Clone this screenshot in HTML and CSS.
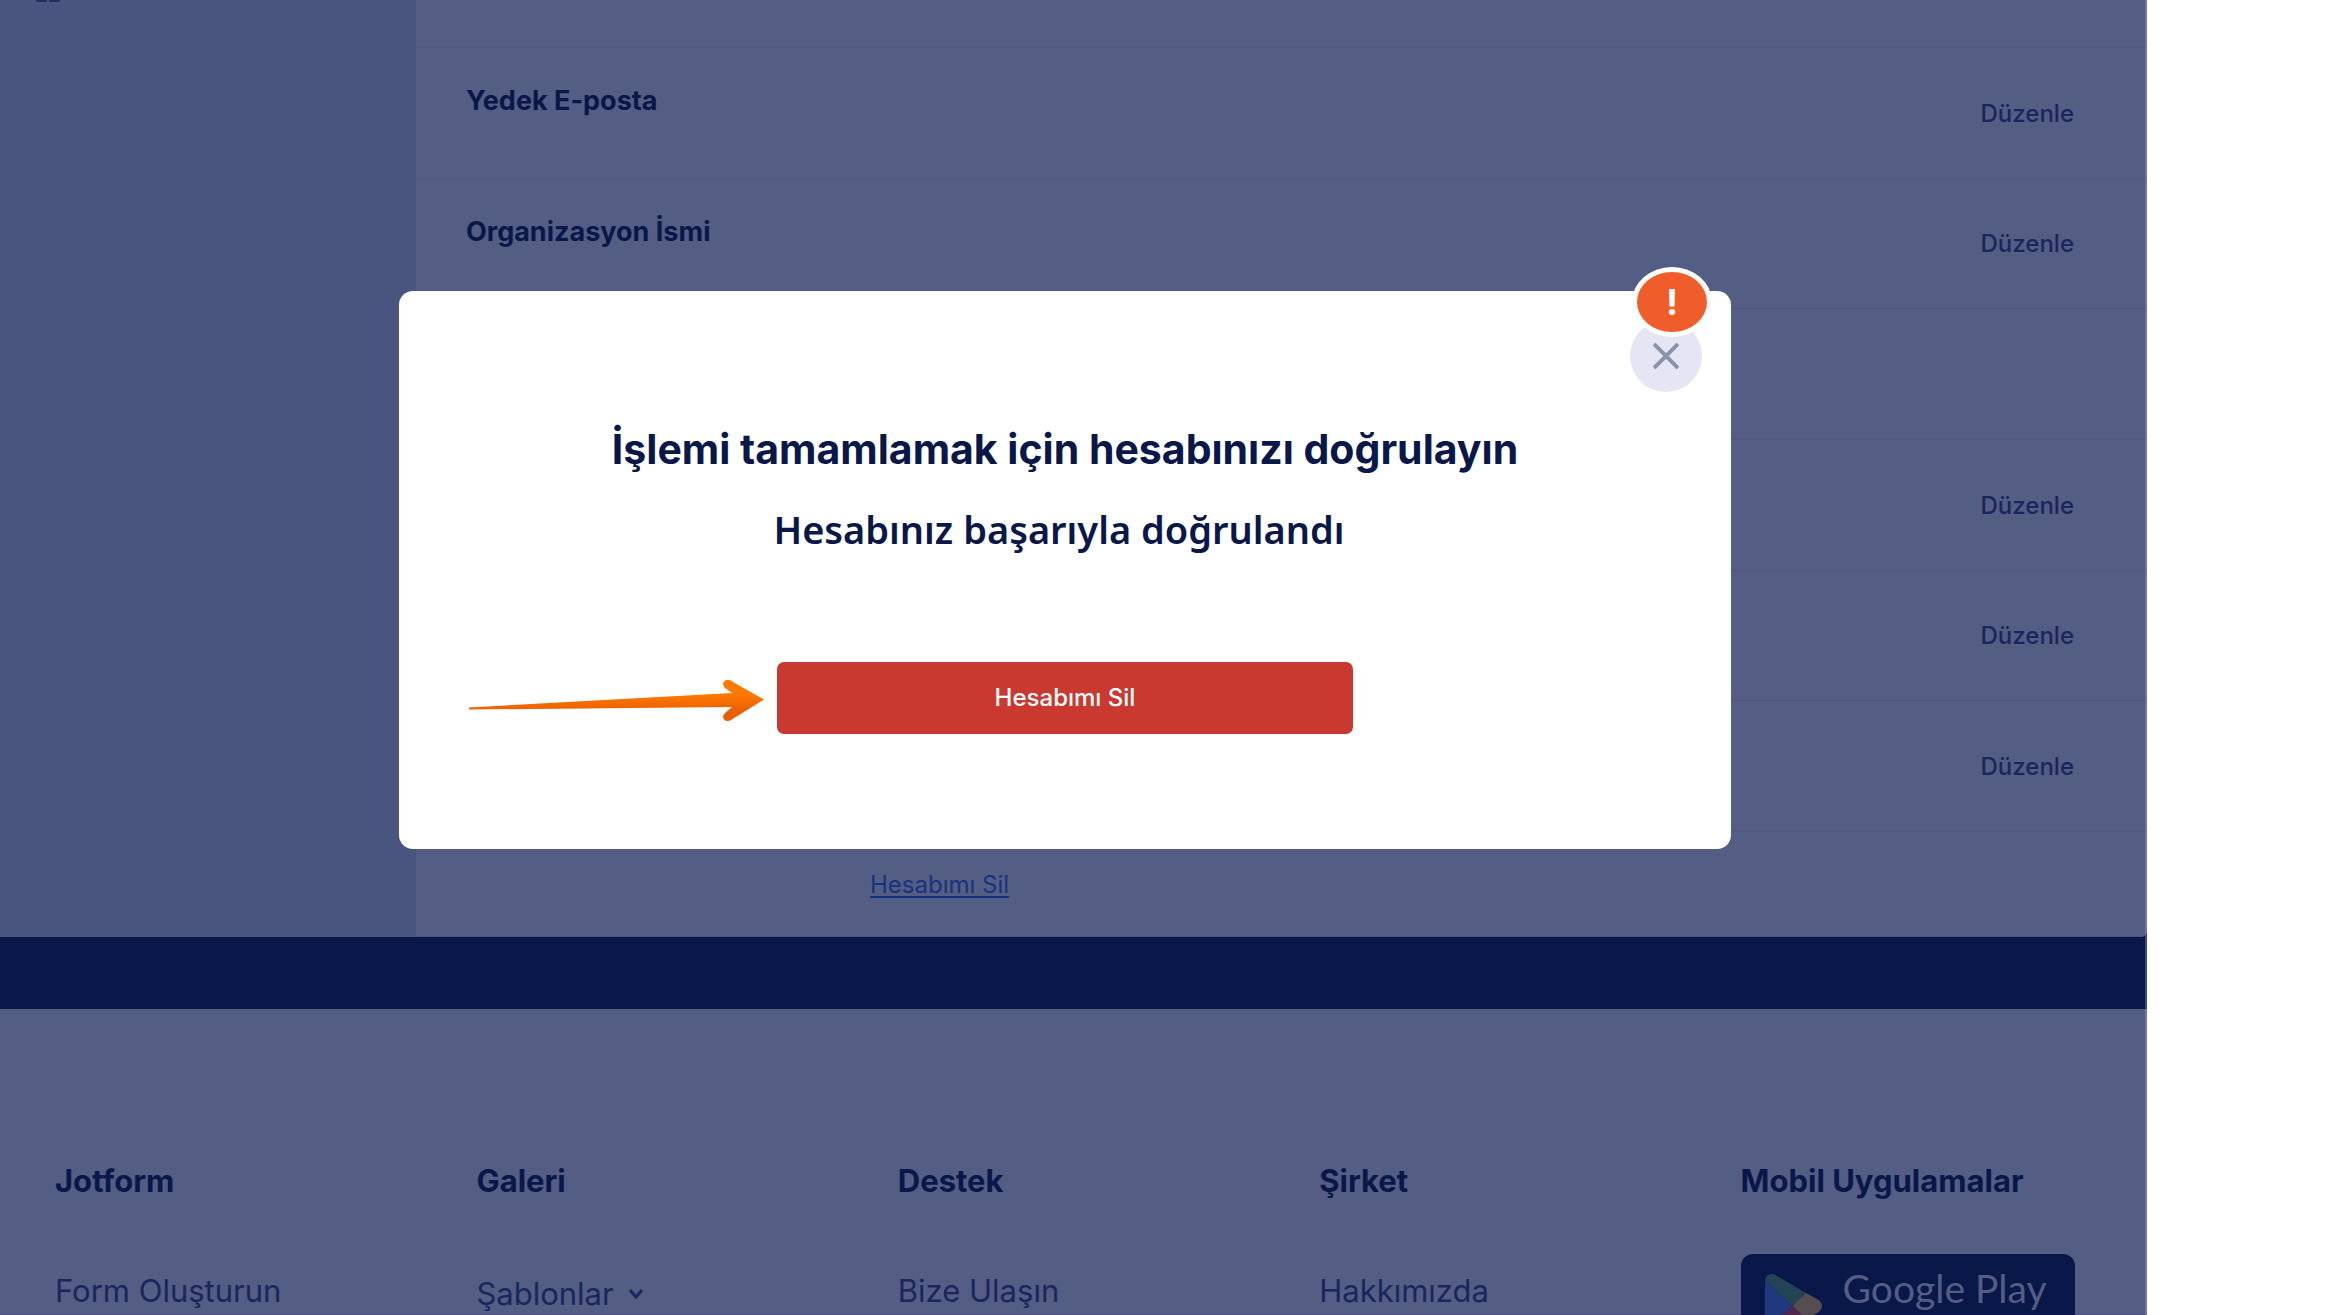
FILE: index.html
```
<!DOCTYPE html>
<html lang="tr">
<head>
<meta charset="utf-8">
<meta name="viewport" content="width=device-width, initial-scale=1">
<title>Hesap Ayarları</title>
<link rel="stylesheet" href="styles.css">
</head>
<body>
<div class="stage">
  <main class="account">
    <aside class="sidebar">
      <svg class="sidebar-icon" width="24" height="2" viewBox="0 0 24 2" aria-hidden="true"><path d="M0 0h11v1l-1 1H2L0 1zM13 0h11v1l-2 1h-8l-1-1z" fill="#242c62"/></svg>
    </aside>
    <section class="settings">
      <div class="settings-lead"></div>
      <div class="settings-list">
        <div class="setting"><h2 class="setting-name">Yedek E-posta</h2><button class="edit" type="button">Düzenle</button></div>
        <div class="setting"><h2 class="setting-name">Organizasyon İsmi</h2><button class="edit" type="button">Düzenle</button></div>
        <div class="setting"></div>
        <div class="setting"><button class="edit" type="button">Düzenle</button></div>
        <div class="setting"><button class="edit" type="button">Düzenle</button></div>
        <div class="setting"><button class="edit" type="button">Düzenle</button></div>
      </div>
      <div class="settings-end"><a class="delete-link" href="#sil">Hesabımı Sil</a></div>
    </section>
  </main>
  <div class="band"></div>
  <footer class="footer">
    <section class="footer-col">
      <h3 class="footer-title">Jotform</h3>
      <a class="footer-link" href="#form">Form Oluşturun</a>
    </section>
    <section class="footer-col">
      <h3 class="footer-title">Galeri</h3>
      <button class="footer-link footer-toggle" type="button">Şablonlar
        <svg width="16" height="12" viewBox="0 0 16 12" fill="none" stroke="#1b265d" stroke-width="3" aria-hidden="true"><path d="M2 2l6 7 6-7"/></svg>
      </button>
    </section>
    <section class="footer-col">
      <h3 class="footer-title">Destek</h3>
      <a class="footer-link" href="#ulasin">Bize Ulaşın</a>
    </section>
    <section class="footer-col">
      <h3 class="footer-title">Şirket</h3>
      <a class="footer-link" href="#hakkimizda">Hakkımızda</a>
    </section>
    <section class="footer-col footer-apps">
      <h3 class="footer-title">Mobil Uygulamalar</h3>
      <a class="store" href="#play">
        <svg width="58" height="64" viewBox="0 0 58 64" aria-hidden="true">
          <path d="M0 6L27 32 0 58z" fill="#1f397c"/>
          <path d="M0 6Q1 0 7 0q2 0 5 2l29 17-14 13z" fill="#224456"/>
          <path d="M41 19l11 6q5 3 5 7t-5 7l-11 6-14-13z" fill="#554e50"/>
          <path d="M0 58l27-26 14 13-29 17q-9 4-12-4z" fill="#50284f"/>
        </svg>
        <span class="store-name">Google Play</span>
      </a>
    </section>
  </footer>
  <div class="overlay">
    <div class="modal" role="dialog" aria-modal="true" aria-labelledby="modal-title">
      <button class="close" type="button" aria-label="Kapat">
        <svg width="26" height="26" viewBox="0 0 26 26" stroke="#8894ab" stroke-width="4" aria-hidden="true"><path d="M1 1l24 24M25 1L1 25"/></svg>
      </button>
      <span class="alert">!</span>
      <h1 class="modal-title" id="modal-title">İşlemi tamamlamak için hesabınızı doğrulayın</h1>
      <p class="modal-text">Hesabınız başarıyla doğrulandı</p>
      <button class="confirm" type="button">Hesabımı Sil</button>
      <svg class="pointer" width="298" height="44" viewBox="0 0 298 44" aria-hidden="true">
        <defs><linearGradient id="orange" x1="0" y1="0" x2="0" y2="1"><stop offset="0.35" stop-color="#ff7a00"/><stop offset="0.75" stop-color="#ea5f00"/></linearGradient></defs>
        <path d="M1 27.500L264 13l-7-5c-4-4-1-9 4-8q2 0 4 2l31 17.500-33 20.500c-4 3-10-1-7-6l8-7L1 29.500z" fill="url(#orange)"/>
      </svg>
    </div>
  </div>
</div>
</body>
</html>
```
FILE: styles.css
```
* { box-sizing: border-box; }

body {
  margin: 0;
  background: #fff;
  font-family: Inter, "Liberation Sans", sans-serif;
  color: #0a1749;
}

h1, h2, h3, p { margin: 0; }

button {
  margin: 0;
  padding: 0;
  border: 0;
  background: none;
  font-family: inherit;
  cursor: pointer;
}

.stage {
  position: relative;
  display: flex;
  flex-direction: column;
  height: 100vh;
  margin-right: 180px;
  overflow: hidden;
  background: #545d83;
}

.stage::after {
  content: "";
  position: absolute;
  inset: 0 0 0 auto;
  width: 2px;
  background: rgba(155, 165, 215, 0.35);
}

/* Account settings */
.account {
  display: flex;
  flex: none;
  background: #0a1749;
}

.sidebar {
  flex: 0 0 416px;
  padding-left: 36px;
  background: #49547f;
}

.sidebar-icon { display: block; }

.settings {
  flex: 1;
  background: #545d83;
  border-bottom: 1px solid #4e5780;
  border-bottom-right-radius: 6px;
}

.settings-lead {
  height: 48px;
  border-bottom: 1px solid #4e5780;
}

.settings-list {
  display: grid;
  grid-auto-rows: 1fr;
  min-height: 784px;
}

.setting {
  display: flex;
  align-items: center;
  padding: 2px 73px 0 50px;
  border-bottom: 1px solid #4e5780;
}

.setting-name {
  align-self: flex-start;
  padding-top: 35px;
  font-size: 27px;
  line-height: 32px;
  font-weight: 700;
}

.edit {
  margin-left: auto;
  font-size: 24px;
  line-height: 32px;
  font-weight: 500;
  color: #1b265d;
}

.settings-end {
  padding: 37px 73px 35px 454px;
  font-size: 24px;
  line-height: 32px;
}

.delete-link {
  color: #16347c;
  text-decoration-thickness: 2px;
  text-underline-offset: 3px;
}

.band {
  flex: none;
  height: 72px;
  background: #0a1749;
}

/* Footer */
.footer {
  flex: 1;
  min-height: 0;
  display: grid;
  grid-template-columns: repeat(5, 1fr);
  column-gap: 87px;
  padding: 152px 72px 0 55px;
  border-bottom: 1px solid #4b5480;
}

.footer-col {
  display: flex;
  flex-direction: column;
  align-items: flex-start;
  gap: 70px;
}

.footer-title {
  font-size: 31px;
  line-height: 40px;
  font-weight: 700;
  white-space: nowrap;
}

.footer-link {
  font-size: 31px;
  line-height: 40px;
  color: #1b265d;
  text-decoration: none;
}

.footer-toggle {
  display: flex;
  align-items: center;
  gap: 14px;
  min-height: 46px;
}

.footer-apps {
  align-items: stretch;
  gap: 53px;
}

.store {
  display: flex;
  flex: none;
  align-items: center;
  gap: 20px;
  height: 104px;
  padding: 0 24px;
  border-radius: 12px;
  background: #0a1749;
  color: #545d83;
  text-decoration: none;
}

.store-name {
  align-self: flex-start;
  font-family: Lato, "Liberation Sans", sans-serif;
  font-size: 39px;
  line-height: 68px;
  white-space: nowrap;
}

/* Confirmation dialog */
.overlay {
  position: absolute;
  inset: 0 17px 0 0;
  display: flex;
  justify-content: center;
  align-items: flex-start;
  padding-top: 291px;
}

.modal {
  position: relative;
  display: flex;
  flex-direction: column;
  align-items: center;
  width: 100%;
  max-width: 1332px;
  padding: 130px 48px 115px;
  border-radius: 14px;
  background: #fff;
}

.modal-title {
  font-size: 41px;
  line-height: 56px;
  font-weight: 700;
}

.modal-text {
  margin-top: 24px;
  padding-right: 12px;
  font-family: "Noto Sans", "Open Sans", sans-serif;
  font-size: 38px;
  line-height: 56px;
  font-weight: 600;
}

.confirm {
  width: 576px;
  max-width: 100%;
  height: 72px;
  margin-top: 105px;
  padding-bottom: 2px;
  border-radius: 7px;
  background: #c93930;
  color: #fff;
  font-size: 24px;
  font-weight: 500;
}

.close {
  position: absolute;
  top: 29px;
  right: 29px;
  display: grid;
  place-items: center;
  width: 72px;
  height: 72px;
  border-radius: 50%;
  background: #e5e5f4;
}

.alert {
  position: absolute;
  top: -24px;
  right: 19px;
  display: grid;
  place-items: center;
  width: 80px;
  height: 70px;
  border: 5px solid #fff;
  border-radius: 50%;
  background: #ef5d2a;
  color: #fff;
  font-size: 36px;
  line-height: 40px;
  font-weight: 700;
}

.pointer {
  position: absolute;
  top: 389px;
  left: 69px;
}
```
